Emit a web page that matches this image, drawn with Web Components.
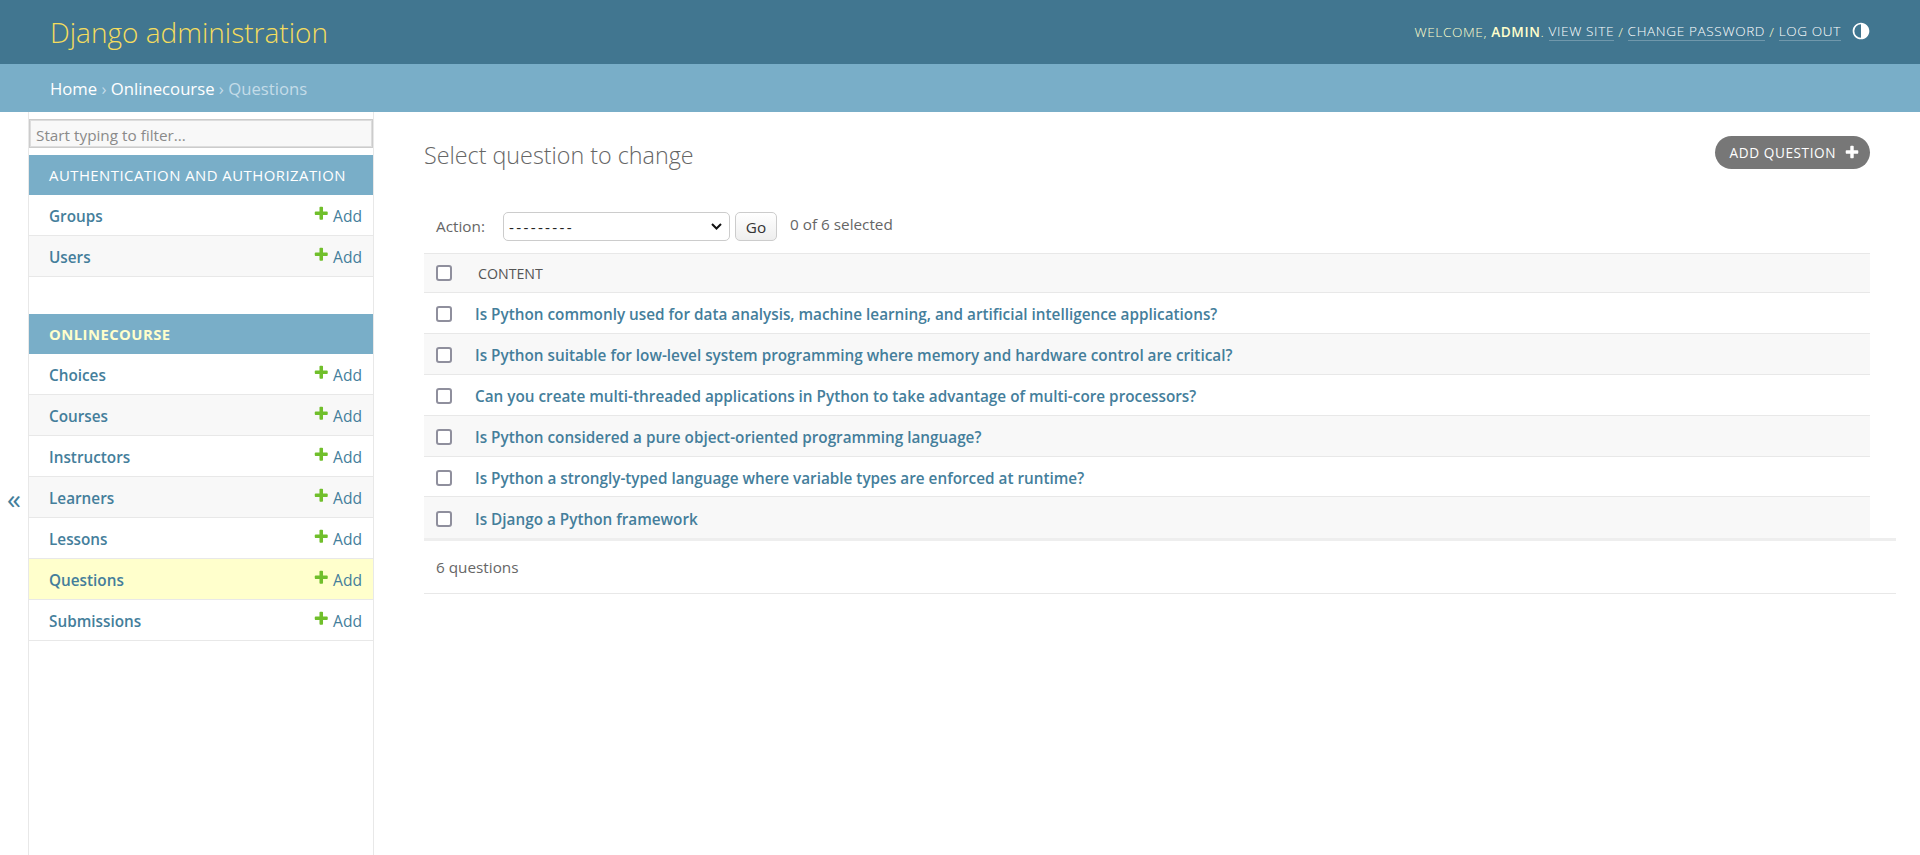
<!DOCTYPE html>
<html lang="en">
<head>
<meta charset="utf-8">
<title>Select question to change | Django site admin</title>
<style>
    html, body { margin: 0; padding: 0; height: 100%; }
    body { font-family: "Open Sans", "Liberation Sans", sans-serif; color: #333; background: #fff; display: flex; flex-direction: column; overflow: hidden; }
</style>
</head>
<body>
<dj-header></dj-header>
<dj-breadcrumbs></dj-breadcrumbs>
<dj-layout>
    <dj-sidebar slot="sidebar">
        <dj-module title="Authentication and Authorization">
            <dj-model-row name="Groups"></dj-model-row>
            <dj-model-row name="Users" alt></dj-model-row>
        </dj-module>
        <dj-module title="Onlinecourse" current>
            <dj-model-row name="Choices"></dj-model-row>
            <dj-model-row name="Courses" alt></dj-model-row>
            <dj-model-row name="Instructors"></dj-model-row>
            <dj-model-row name="Learners" alt></dj-model-row>
            <dj-model-row name="Lessons"></dj-model-row>
            <dj-model-row name="Questions" current></dj-model-row>
            <dj-model-row name="Submissions"></dj-model-row>
        </dj-module>
    </dj-sidebar>
    <dj-changelist>
        <dj-result-row>Is Python commonly used for data analysis, machine learning, and artificial intelligence applications?</dj-result-row>
        <dj-result-row alt>Is Python suitable for low-level system programming where memory and hardware control are critical?</dj-result-row>
        <dj-result-row>Can you create multi-threaded applications in Python to take advantage of multi-core processors?</dj-result-row>
        <dj-result-row alt>Is Python considered a pure object-oriented programming language?</dj-result-row>
        <dj-result-row>Is Python a strongly-typed language where variable types are enforced at runtime?</dj-result-row>
        <dj-result-row alt>Is Django a Python framework</dj-result-row>
    </dj-changelist>
</dj-layout>

<script>
(function() {
    "use strict";

    // same plus glyph as the admin's addlink icon
    const plusPath = 'M1600 796v192q0 40-28 68t-68 28h-416v416q0 40-28 68t-68 28h-192q-40 0-68-28t-28-68v-416h-416q-40 0-68-28t-28-68v-192q0-40 28-68t68-28h416v-416q0-40 28-68t68-28h192q40 0 68 28t28 68v416h416q40 0 68 28t28 68z';
    const chevron = "data:image/svg+xml,%3Csvg xmlns='http://www.w3.org/2000/svg' viewBox='0 0 11 7'%3E%3Cpath d='M1 1l4.5 4.5L10 1' fill='none' stroke='%23111' stroke-width='2'/%3E%3C/svg%3E";

    function define(name, html, setup) {
        customElements.define(name, class extends HTMLElement {
            constructor() {
                super();
                this.attachShadow({mode: 'open'}).innerHTML = html;
            }
            connectedCallback() {
                if (setup) setup.call(this, this.shadowRoot);
            }
        });
    }

    define('dj-header', `
<style>
    :host { display: flex; flex: none; height: 64px; box-sizing: border-box; padding: 0 49px 0 50px; align-items: center; justify-content: space-between; background: #417690; color: #fff; }
    .brand { font-size: 28px; font-weight: 300; color: #f5dd5d; }
    .tools { display: flex; align-items: center; font-size: 13.6px; font-weight: 300; letter-spacing: .62px; text-transform: uppercase; color: #ffc; position: relative; top: -1px; white-space: pre; }
    strong { font-weight: 600; }
    a { color: #fff; text-decoration: none; border-bottom: 1px solid rgba(255,255,255,.25); }
    svg { width: 20px; height: 20px; margin-left: 10px; fill: #fff; }
</style>
<div class="brand">Django administration</div>
<div class="tools">Welcome, <strong>admin</strong>. <a>View site</a> / <a>Change password</a> / <a>Log out</a>
<svg viewBox="0 0 24 24"><path d="M12 22C6.477 22 2 17.523 2 12S6.477 2 12 2s10 4.477 10 10-4.477 10-10 10zm0-2a8 8 0 1 0 0-16v16z" transform="matrix(-1 0 0 1 24 0)"/></svg></div>`);

    define('dj-breadcrumbs', `
<style>
    :host { display: flex; flex: none; height: 48px; box-sizing: border-box; padding: 0 50px; align-items: center; background: #79aec8; color: #c4dce8; font-size: 16.7px; font-weight: 400; white-space: pre; }
    a { color: #fff; }
</style>
<a>Home</a> › <a>Onlinecourse</a> › Questions`);

    define('dj-layout', `
<style>
    :host { display: flex; flex: 1; min-height: 0; }
    .toggle { flex: none; width: 28px; display: flex; align-items: center; justify-content: center; font-size: 28px; color: #447e9b; }
    .toggle span { position: relative; top: 14px; }
    .side { flex: none; display: flex; }
    .main { flex: 1; min-width: 0; display: flex; }
</style>
<div class="toggle"><span>«</span></div>
<div class="side"><slot name="sidebar"></slot></div>
<div class="main"><slot></slot></div>`);

    define('dj-sidebar', `
<style>
    :host { display: block; width: 346px; box-sizing: border-box; border-left: 1px solid #e8e8e8; border-right: 1px solid #e8e8e8; padding-top: 7px; }
    input { display: block; width: 344px; height: 29px; box-sizing: border-box; margin: 0 0 7px 0; padding: 2px 6px 0; border: 1px solid #ccc; outline: 1px solid #ddd; outline-offset: -2px; background: #f8f8f8; font: 400 15.3px "Open Sans", sans-serif; color: #333; }
    input::placeholder { color: #8a8a8a; opacity: 1; }
</style>
<input placeholder="Start typing to filter...">
<slot></slot>`);

    define('dj-module', `
<style>
    :host { display: block; margin-bottom: 37px; }
    .caption { height: 40px; box-sizing: border-box; padding-left: 20px; display: flex; align-items: center; background: #79aec8; color: #fff; font-size: 14.9px; letter-spacing: .47px; text-transform: uppercase; white-space: nowrap; }
    :host([current]) .caption { color: #ffc; font-weight: 700; font-size: 14.8px; }
</style>
<div class="caption"></div>
<slot></slot>`, function(root) {
        root.querySelector('.caption').textContent = this.getAttribute('title');
        this.removeAttribute('title');
    });

    define('dj-model-row', `
<style>
    :host { display: flex; height: 41px; box-sizing: border-box; padding: 2px 11px 0 20px; align-items: center; justify-content: space-between; border-bottom: 1px solid #e8e8e8; background: #fff; font-size: 15.3px; color: #447e9b; }
    :host([alt]) { background: #f8f8f8; }
    :host([current]) { background: #ffc; }
    .name { font-weight: 600; }
    .add { display: flex; align-items: center; font-size: 15.6px; }
    svg { width: 16.5px; height: 16.5px; margin-right: 4px; position: relative; top: -3px; fill: #70bf2b; }
</style>
<span class="name"></span>
<span class="add"><svg viewBox="0 0 1792 1792"><path d="${plusPath}"/></svg>Add</span>`, function(root) {
        root.querySelector('.name').textContent = this.getAttribute('name');
    });

    define('dj-changelist', `
<style>
    :host { display: block; flex: 1; min-width: 0; box-sizing: border-box; padding: 0 24px 0 50px; font-size: 15.3px; color: #666; }
    .top { display: flex; height: 57px; padding-top: 24px; padding-right: 26px; justify-content: space-between; align-items: flex-start; }
    h1 { margin: 0; padding-top: 3px; font-size: 23.3px; font-weight: 300; color: #666; line-height: 32px; }
    .tool { display: flex; align-items: center; height: 33px; box-sizing: border-box; padding: 0 10px 0 15px; border-radius: 17px; background: #777; color: #fff; font-size: 13.6px; letter-spacing: .58px; text-transform: uppercase; white-space: nowrap; }
    .tool svg { width: 16px; height: 16px; margin-left: 8px; fill: #fff; position: relative; top: -1px; }
    .actions { display: flex; align-items: flex-start; margin-top: 19px; height: 41px; padding-left: 12px; padding-right: 26px; line-height: 29px; }
    .actions label { width: 67px; }
    select { appearance: none; width: 227px; height: 29px; box-sizing: border-box; border: 1px solid #ccc; border-radius: 5px; background: #fff url("${chevron}") no-repeat right 7px center / 11px 7px; color: #222; font: 400 15.3px "Open Sans", sans-serif; letter-spacing: 2.3px; padding: 0 5px; }
    button { width: 42px; height: 29px; margin-left: 5px; border: 1px solid #ccc; border-radius: 5px; background: linear-gradient(#fff, #eee); color: #333; font: 400 15.3px "Open Sans", sans-serif; padding: 0; }
    .count { margin-left: 13px; position: relative; top: -2px; }
    .table { margin-right: 26px; }
    .head { display: flex; align-items: center; height: 40px; box-sizing: border-box; padding-left: 12px; background: #f8f8f8; border-top: 1px solid #e8e8e8; border-bottom: 1px solid #e8e8e8; font-size: 14.2px; color: #555; text-transform: uppercase; }
    .head span { margin-left: 26px; }
    input { appearance: none; width: 16px; height: 16px; margin: 0; box-sizing: border-box; border: 2px solid #8f8f9d; border-radius: 3px; background: #fff; }
    .paginator { height: 56px; box-sizing: border-box; padding: 0 0 1px 12px; display: flex; align-items: center; border-top: 3px solid #eee; border-bottom: 1px solid #e8e8e8; color: #666; }
</style>
<div class="top">
    <h1>Select question to change</h1>
    <a class="tool">Add question<svg viewBox="0 0 1792 1792"><path d="${plusPath}"/></svg></a>
</div>
<div class="actions">
    <label>Action:</label>
    <select><option>---------</option></select>
    <button>Go</button>
    <span class="count">0 of 6 selected</span>
</div>
<div class="table">
    <div class="head"><input type="checkbox"><span>Content</span></div>
    <slot></slot>
</div>
<div class="paginator">6 questions</div>`);

    define('dj-result-row', `
<style>
    :host { display: flex; align-items: center; height: 40.9px; box-sizing: border-box; padding: 2px 0 0 12px; border-bottom: 1px solid #e8e8e8; background: #fff; font-size: 15.3px; font-weight: 600; color: #447e9b; }
    :host([alt]) { background: #f8f8f8; }
    :host(:last-of-type) { border-bottom: 0; }
    input { appearance: none; width: 16px; height: 16px; margin: 0 23px 0 0; box-sizing: border-box; border: 2px solid #8f8f9d; border-radius: 3px; background: #fff; flex: none; }
</style>
<input type="checkbox"><slot></slot>`);
})();
</script>
</body>
</html>
